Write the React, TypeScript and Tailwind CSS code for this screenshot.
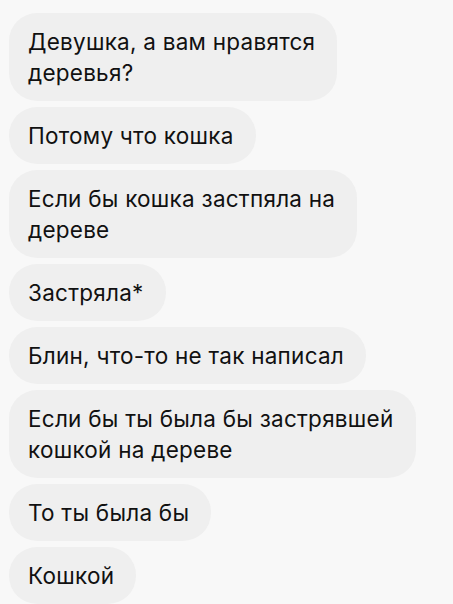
import React from 'react';

const messages: string[][] = [
    ['Девушка, а вам нравятся', 'деревья?'],
    ['Потому что кошка'],
    ['Если бы кошка застпяла на', 'дереве'],
    ['Застряла*'],
    ['Блин, что-то не так написал'],
    ['Если бы ты была бы застрявшей', 'кошкой на дереве'],
    ['То ты была бы'],
    ['Кошкой'],
];

export default function App() {
    return (
        <div
            className="w-[453px] h-[604px] overflow-hidden bg-[#f8f8f8] px-[9px] pt-[13px] flex flex-col items-start gap-[6px]"
            style={{ fontFamily: 'Inter, "Liberation Sans", sans-serif' }}
        >
            {messages.map((lines, i) => (
                <div
                    key={i}
                    className="bg-[#efefef] rounded-[28px] pl-[19px] pr-[22px] py-[13px] text-[22.5px] tracking-[0.25px] leading-[31px] text-[#111111] whitespace-nowrap"
                >
                    {lines.map((line, j) => (
                        <div key={j}>{line}</div>
                    ))}
                </div>
            ))}
        </div>
    );
}
